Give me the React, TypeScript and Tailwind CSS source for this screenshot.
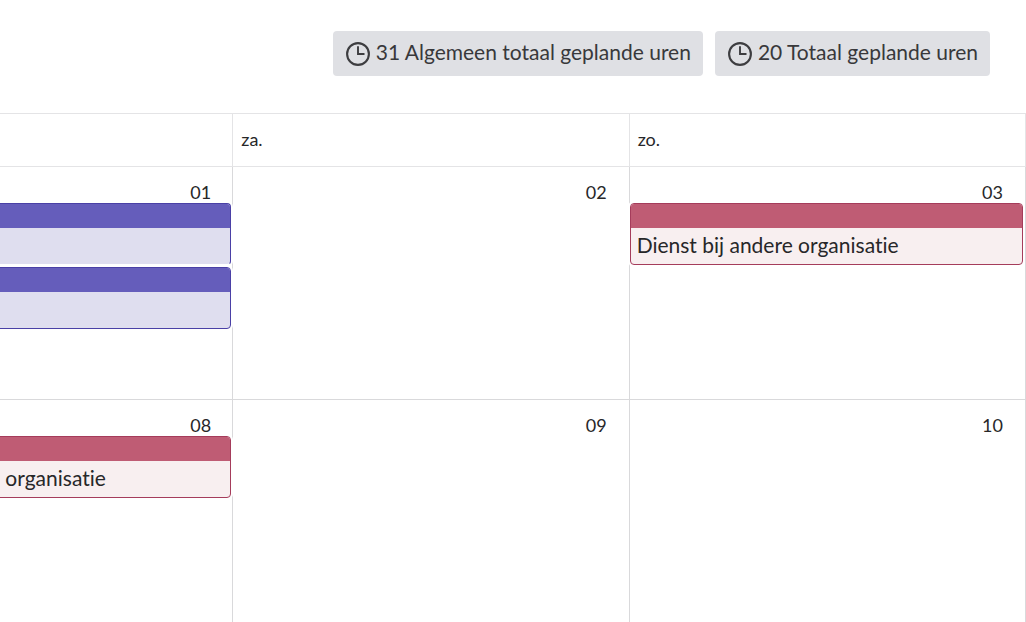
type Shift = { title: string; label: string; variant: "own" | "external" };

type Day = { label: string; shifts: Shift[] };

type Total = { hours: number; label: string };

const totals: Total[] = [
  { hours: 31, label: "Algemeen totaal geplande uren" },
  { hours: 20, label: "Totaal geplande uren" },
];

const weekdays = ["", "za.", "zo."];

const external: Shift = {
  title: "",
  label: "Dienst bij andere organisatie",
  variant: "external",
};

const own: Shift = { title: "", label: "", variant: "own" };

const weeks: Day[][] = [
  [
    { label: "01", shifts: [own, own] },
    { label: "02", shifts: [] },
    { label: "03", shifts: [external] },
  ],
  [
    { label: "08", shifts: [external] },
    { label: "09", shifts: [] },
    { label: "10", shifts: [] },
  ],
];

const variants = {
  own: {
    box: "border-[#4a40a6] bg-[#dfdeef]",
    bar: "bg-[#655dbb]",
  },
  external: {
    box: "border-[#a53c5b] bg-[#f8eff0]",
    bar: "bg-[#bf5c74]",
  },
};

function ClockIcon() {
  return (
    <svg
      viewBox="0 0 24 24"
      className="size-6 shrink-0 fill-none stroke-[#3d3d40]"
      aria-hidden="true"
    >
      <circle cx="12" cy="12" r="10.9" strokeWidth="2.1" />
      <path d="M12 4.2V12H18.5" strokeWidth="1.9" />
    </svg>
  );
}

function TotalBadge({ total }: { total: Total }) {
  return (
    <div className="flex h-[45px] items-center gap-1.5 rounded bg-[#dfe0e4] pr-3 pl-[13px] text-[21px] whitespace-nowrap text-[#38383b]">
      <ClockIcon />
      <span className="pb-1">
        {total.hours} {total.label}
      </span>
    </div>
  );
}

function ShiftCard({ shift }: { shift: Shift }) {
  const styles = variants[shift.variant];

  return (
    <div
      className={`mb-0.5 h-[62px] overflow-hidden rounded border ring-2 ring-white not-last:border-b-white ${styles.box}`}
    >
      <div className={`h-6 ${styles.bar}`}>{shift.title}</div>
      <div className="flex h-9 items-center px-1.5 pb-0.5 text-[21px] whitespace-nowrap">
        {shift.label}
      </div>
    </div>
  );
}

export default function App() {
  return (
    <main className="h-screen overflow-hidden bg-white font-['Lato',sans-serif] text-[#272729] [font-variant-ligatures:none]">
      <header className="flex justify-end gap-3 pt-[31px] pr-9 pb-[37px]">
        {totals.map((total) => (
          <TotalBadge key={total.label} total={total} />
        ))}
      </header>

      <div className="flex justify-end">
        <table className="w-[115.9%] shrink-0 table-fixed border-separate border-spacing-0 border-t border-[#e4e4e6]">
          <thead>
            <tr>
              {weekdays.map((weekday, i) => (
                <th
                  key={i}
                  className="h-[53px] border-r border-b border-[#e4e4e6] px-2 pb-0.5 text-left text-lg font-normal"
                >
                  {weekday}
                </th>
              ))}
            </tr>
          </thead>
          <tbody>
            {weeks.map((days, i) => (
              <tr key={i}>
                {days.map((day) => (
                  <td
                    key={day.label}
                    className="h-[233px] border-r border-b border-[#d9d9db] pr-0.5 align-top first:pr-px"
                  >
                    <div className="flex h-9 items-end justify-end pr-5 text-lg leading-[22px]">
                      {day.label}
                    </div>
                    {day.shifts.map((shift, j) => (
                      <ShiftCard key={j} shift={shift} />
                    ))}
                  </td>
                ))}
              </tr>
            ))}
          </tbody>
        </table>
      </div>
    </main>
  );
}
